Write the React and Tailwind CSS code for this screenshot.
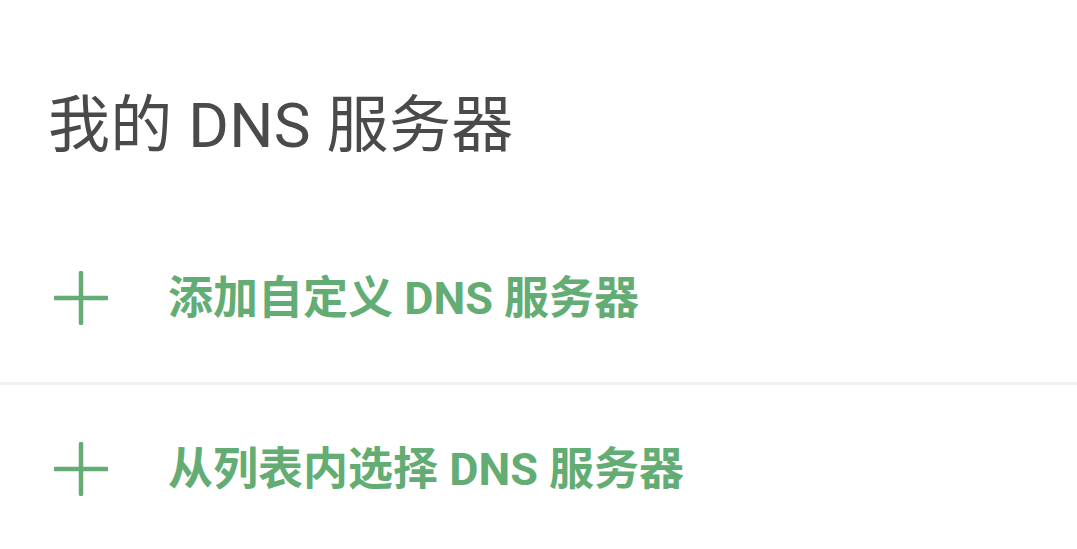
import React from "react";

function Plus() {
  return (
    <svg width="54" height="54" viewBox="0 0 54 54" className="shrink-0">
      <path d="M27 2 V52 M1 27 H53" stroke="#63ad74" strokeWidth="4.5" strokeLinecap="round" fill="none" />
    </svg>
  );
}

function Row({ label }) {
  return (
    <div className="flex items-center h-[168px] pl-[54px]">
      <Plus />
      <span className="ml-[60px] text-[45px] font-bold text-[#63ad74] leading-none">
        {label}
      </span>
    </div>
  );
}

export default function App() {
  return (
    <div
      className="w-[1077px] h-[549px] bg-white overflow-hidden"
      style={{ fontFamily: '"Roboto", "Noto Sans CJK SC", sans-serif' }}
    >
      <div className="h-[214px] flex items-start pl-[48px] pt-[92px]">
        <h1 className="text-[62px] font-normal text-[#4a4a4a] leading-[68px] tracking-[0.3px]">我的 DNS 服务器</h1>
      </div>
      <Row label="添加自定义 DNS 服务器" />
      <div className="h-[3px] bg-[#f0f0f0]" />
      <Row label="从列表内选择 DNS 服务器" />
    </div>
  );
}
